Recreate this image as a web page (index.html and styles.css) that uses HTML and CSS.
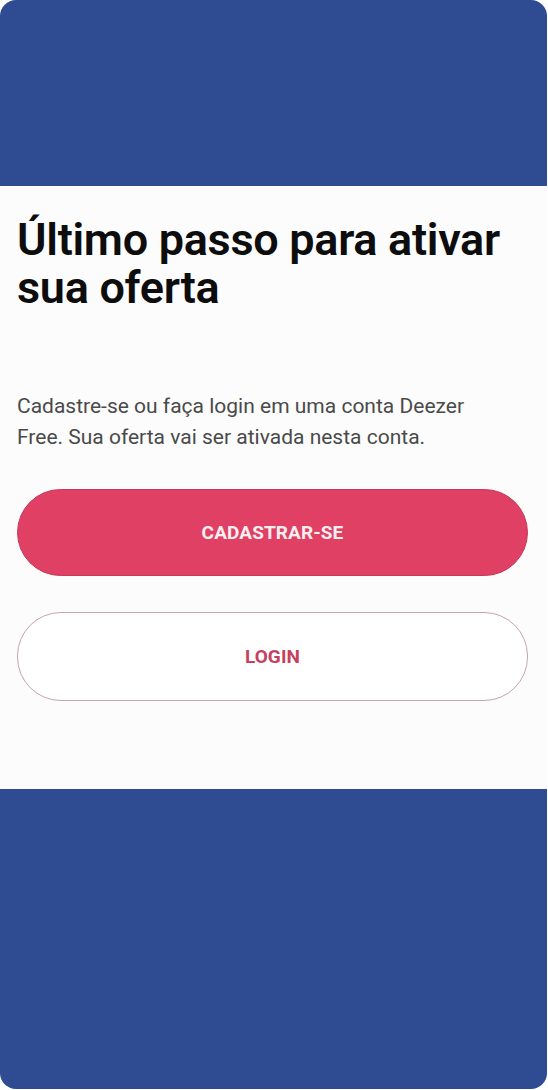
FILE: index.html
```html
<!DOCTYPE html>
<html lang="pt-BR">
<head>
  <meta charset="UTF-8" />
  <meta name="viewport" content="width=device-width, initial-scale=1.0"/>
  <title>Ativar oferta | Deezer</title>
  <link rel="stylesheet" href="styles.css">
</head>
<body>
  <div class="frame">
    <div class="top-band"></div>

    <!-- Offer activation panel -->
    <section class="panel">
      <h1>Último passo para ativar sua oferta</h1>
      <p class="lead">Cadastre-se ou faça login em uma conta Deezer Free. Sua oferta vai ser ativada nesta conta.</p>

      <div class="actions">
        <button class="btn btn-primary" type="button">CADASTRAR-SE</button>
        <button class="btn btn-outline" type="button">LOGIN</button>
      </div>
    </section>

    <div class="bottom-band"></div>
  </div>
</body>
</html>
```

FILE: styles.css
```css
* {
  margin: 0;
  padding: 0;
  box-sizing: border-box;
}

body {
  background: #fff;
  font-family: Roboto, 'Noto Sans', sans-serif;
  color: #111;
}

.frame {
  width: 547px;
  height: 1089px;
  background: #2f4c93;
  border-radius: 16px;
  overflow: hidden;
  display: flex;
  flex-direction: column;
}

.top-band {
  height: 186px;
}

.panel {
  height: 603px;
  background: #fcfcfd;
  padding: 30px 19px 0 17px;
}

.bottom-band {
  flex: 1;
}

h1 {
  font-family: Roboto, 'Noto Sans', sans-serif;
  font-size: 45px;
  font-weight: 600;
  line-height: 48px;
  letter-spacing: -0.3px;
  color: #0d0d0d;
  width: 500px;
}

.lead {
  margin-top: 79px;
  font-size: 21px;
  line-height: 31px;
  color: #4a4a4a;
  width: 480px;
}

.actions {
  margin-top: 36px;
  display: flex;
  flex-direction: column;
  gap: 36px;
}

.btn {
  width: 100%;
  height: 87px;
  border-radius: 44px;
  font-family: Roboto, sans-serif;
  font-size: 19px;
  font-weight: 700;
  letter-spacing: 0.1px;
  cursor: pointer;
}

.btn-primary {
  background: #df4063;
  color: #fbeef1;
  border: 1px solid #c8385a;
}

.btn-outline {
  height: 89px;
  background: #fff;
  color: #c5425f;
  border: 1.5px solid #c7a3ab;
}
```
